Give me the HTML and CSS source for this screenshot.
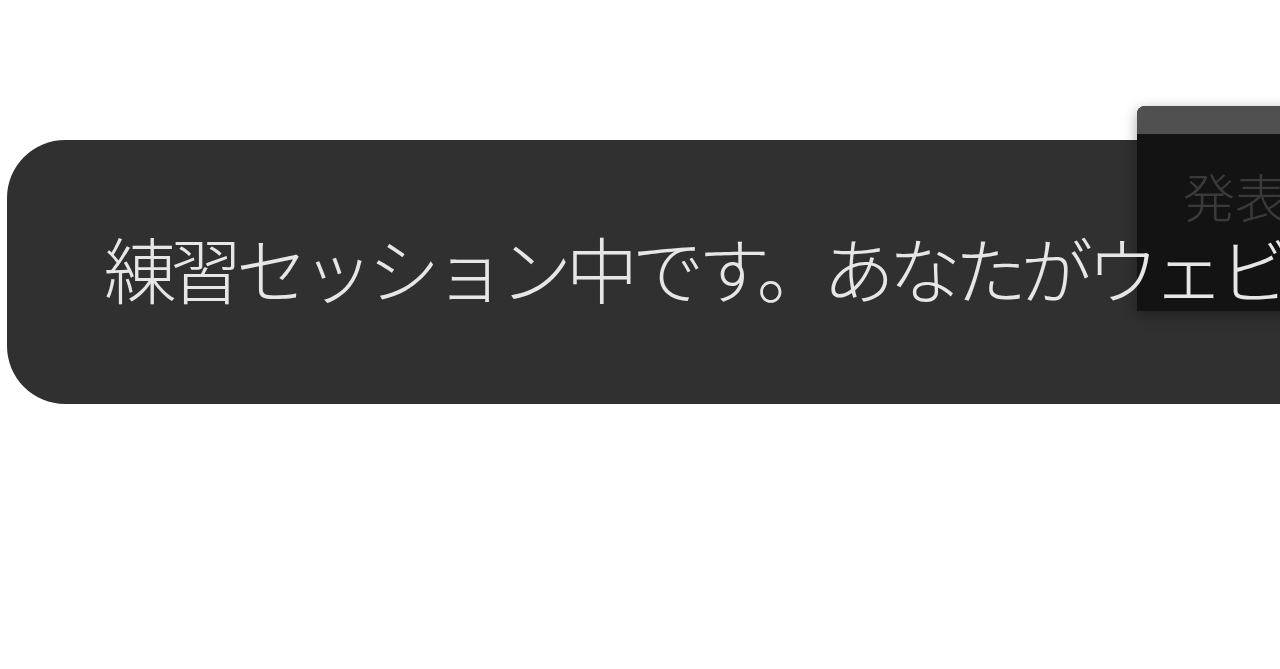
FILE: index.html
```html
<!DOCTYPE html>
<html lang="ja">
<head>
<meta charset="utf-8">
<link rel="stylesheet" href="styles.css">
</head>
<body>
<div class="stage">
  <div class="bar">
    <span class="msg">練習セッション中です。あなたがウェビナーを開始するまで、参加者には表示されません。</span>
  </div>
  <div class="popup">
    <div class="popup-head"></div>
    <div class="popup-body">発表者</div>
  </div>
</div>
</body>
</html>
```
FILE: styles.css
```css
html, body {
  margin: 0;
  background: #ffffff;
  overflow: hidden;
}
.stage {
  position: relative;
  width: 1280px;
  height: 669px;
  padding: 140px 0 0 7px;
  box-sizing: border-box;
}
.bar {
  height: 264px;
  background: #303030;
  border-radius: 58px 0 0 58px;
  display: flex;
  align-items: center;
  padding-left: 97px;
  overflow: hidden;
  white-space: nowrap;
}
.msg {
  position: relative;
  z-index: 5;
  font-family: "Noto Sans CJK JP", sans-serif;
  font-size: 72px;
  font-weight: 300;
  letter-spacing: -6px;
  color: #e6e6e6;
  margin-top: -12px;
}
.popup {
  position: absolute;
  z-index: 2;
  left: 1137px;
  top: 106px;
  width: 200px;
  height: 205px;
  background: #131313;
  border-radius: 8px 0 0 0;
  box-shadow: 0 4px 14px rgba(0,0,0,0.35);
  display: flex;
  flex-direction: column;
}
.popup-head {
  height: 28px;
  background: #505050;
  border-radius: 8px 0 0 0;
}
.popup-body {
  padding: 36px 0 0 46px;
  font-family: "Noto Sans CJK JP", sans-serif;
  font-size: 52px;
  font-weight: 300;
  line-height: 1;
  color: #3a3a3a;
  white-space: nowrap;
}
```
